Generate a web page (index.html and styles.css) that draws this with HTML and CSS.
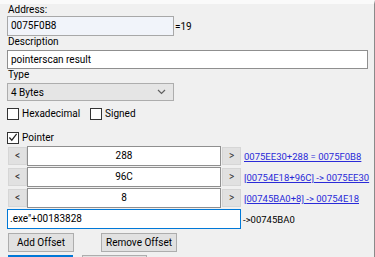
FILE: index.html
```html
<!doctype html>
<html>
<head>
<meta charset="utf-8">
<link rel="stylesheet" href="styles.css">
</head>
<body>
	<div class="panel">
		<div class="label">Address:</div>
		<div class="row">
			<div class="edit addr">0075F0B8</div>
			<span class="after">=19</span>
		</div>
		<div class="label">Description</div>
		<div class="edit desc">pointerscan result</div>
		<div class="label">Type</div>
		<div class="combo">
			<span>4 Bytes</span>
			<svg width="9" height="6" viewBox="0 0 9 6"><path d="M1 1 L4.5 4.5 L8 1" fill="none" stroke="#606060" stroke-width="1.2"/></svg>
		</div>
		<div class="checks">
			<label class="chk"><span class="box"></span>Hexadecimal</label>
			<label class="chk"><span class="box"></span>Signed</label>
		</div>
		<div class="checks ptr">
			<label class="chk"><span class="box"><svg width="11" height="11" viewBox="0 0 11 11"><path d="M1.5 5.5 L4.2 8.5 L9.5 1.5" fill="none" stroke="#222" stroke-width="1.3"/></svg></span>Pointer</label>
		</div>
		<div class="offsets">
			<div class="orow">
				<div class="sbtn">&lt;</div>
				<div class="edit oval">288</div>
				<div class="sbtn">&gt;</div>
				<a class="link">0075EE30+288 = 0075F0B8</a>
			</div>
			<div class="orow">
				<div class="sbtn">&lt;</div>
				<div class="edit oval">96C</div>
				<div class="sbtn">&gt;</div>
				<a class="link">[00754E18+96C] -&gt; 0075EE30</a>
			</div>
			<div class="orow">
				<div class="sbtn">&lt;</div>
				<div class="edit oval">8</div>
				<div class="sbtn">&gt;</div>
				<a class="link">[00745BA0+8] -&gt; 00754E18</a>
			</div>
			<div class="orow">
				<div class="edit base">.exe"+00183828</div>
				<span class="res">-&gt;00745BA0</span>
			</div>
		</div>
		<div class="btns">
			<div class="btn add">Add Offset</div>
			<div class="btn rem">Remove Offset</div>
		</div>
		<div class="btns low">
			<div class="btn ok"></div>
			<div class="btn cancel"></div>
		</div>
	</div>
</body>
</html>
```
FILE: styles.css
```css
*{
	margin:0;
	padding:0;
	box-sizing:border-box;
}
body{
	background:#f0f0f0;
	font-family:Roboto, sans-serif;
	font-size:10px;
	color:#000;
	width:375px;
	height:257px;
	overflow:hidden;
}
.panel{
	border-top:4px solid #fafafa;
	border-right:1px solid #8a8a8a;
	height:257px;
	overflow:hidden;
	padding-left:7px;
}
.label{
	height:12px;
	line-height:12px;
	padding-left:1px;
}
.row{
	display:flex;
	align-items:center;
}
.edit{
	flex-shrink:0;
	height:20px;
	line-height:18px;
	border:1px solid #8f8f8f;
	background:#fff;
	padding-left:3px;
	white-space:nowrap;
	overflow:hidden;
}
.addr{
	width:167px;
	background:#f1f4fa;
	border-color:#a8a8a8;
}
.after{
	margin-left:1px;
}
.desc{
	width:361px;
	height:19px;
	margin-top:2px;
}
.combo{
	width:167px;
	height:18px;
	margin-top:2px;
	background:#e5e5e5;
	border:1px solid #adadad;
	display:flex;
	align-items:center;
	justify-content:space-between;
	padding:0 7px 0 3px;
}
.checks{
	display:flex;
	gap:10px;
	margin-top:6px;
	height:13px;
	align-items:center;
}
.ptr{
	margin-top:11px;
}
.chk{
	display:flex;
	align-items:center;
	gap:3px;
}
.box{
	width:12px;
	height:12px;
	border:1px solid #333;
	background:#fff;
	display:flex;
	align-items:center;
	justify-content:center;
}
.offsets{
	margin-top:2px;
	display:flex;
	flex-direction:column;
	gap:1px;
}
.orow{
	display:flex;
	align-items:center;
	height:20px;
}
.sbtn{
	flex-shrink:0;
	width:19px;
	height:18px;
	background:#e1e1e1;
	border:1px solid #d6d6d6;
	text-align:center;
	line-height:16px;
	color:#333;
}
.orow .sbtn:first-child{
	margin-left:1px;
}
.oval{
	width:194px;
	text-align:center;
	padding-left:0;
}
.orow .sbtn + .edit + .sbtn{
	margin-left:1px;
}
.link{
	margin-left:3px;
	color:#2a2ad8;
	text-decoration:underline;
	white-space:nowrap;
	font-size:9.5px;
}
.base{
	width:234px;
	border-color:#0078d7;
	padding-left:2px;
}
.res{
	margin-left:2px;
	font-size:9.5px;
}
.btns{
	display:flex;
	margin-top:4px;
	padding-left:1px;
}
.btn{
	flex-shrink:0;
	height:19px;
	line-height:17px;
	background:#e1e1e1;
	border:1px solid #adadad;
	text-align:center;
}
.add{
	width:66px;
}
.rem{
	width:76px;
	margin-left:27px;
}
.low{
	margin-top:3px;
}
.ok{
	width:65px;
	border:1px solid #0078d7;
	box-shadow:inset 0 0 0 1px #0078d7;
}
.cancel{
	width:65px;
	margin-left:9px;
}
```
